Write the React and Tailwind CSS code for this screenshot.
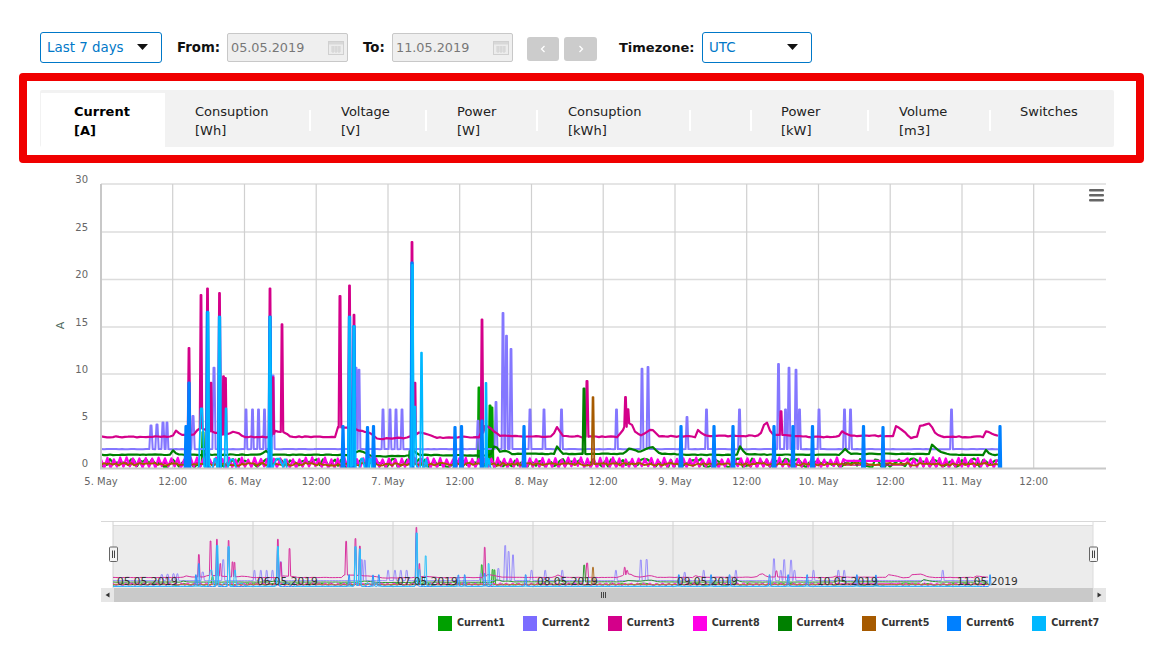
import React from "react";

const END = 1000;
const X0 = 101;
const Y0 = 468;
const UNIT = 9.45;

function noise(i, seed) {
  const s = Math.sin(i * 12.9898 + seed * 78.233) * 43758.5453;
  return s - Math.floor(s) - 0.5;
}
function interp(keys, x) {
  if (x <= keys[0][0]) return keys[0][1];
  for (let i = 1; i < keys.length; i++) {
    if (x <= keys[i][0]) {
      const [a, b] = keys[i - 1];
      const [c, d] = keys[i];
      return b + ((d - b) * (x - a)) / (c - a);
    }
  }
  return keys[keys.length - 1][1];
}
function build(keys, spikes, seed, amp, from = X0, to = END) {
  const list = [...spikes].sort((a, b) => a[0] - b[0]);
  const pts = [];
  const base = (x, i) => interp(keys, x) + noise(i, seed) * amp;
  let i = 0;
  for (let x = from; x <= to; x += 3) {
    i++;
    const inside = list.some((s) => Math.abs(x - s[0]) <= (s[2] || 1.6) * 0.72);
    if (!inside) pts.push([x, base(x, i)]);
  }
  list.forEach((s) => {
    const hw = (s[2] || 1.6) * 0.72;
    const b = s[3] === undefined ? interp(keys, s[0]) : s[3];
    pts.push([s[0] - hw, b]);
    pts.push([s[0] - hw * 0.3, s[1]]);
    pts.push([s[0] + hw * 0.3, s[1]]);
    pts.push([s[0] + hw, b]);
  });
  return pts.sort((a, b) => a[0] - b[0]);
}
function zigzag(period, hi, lo, seed, flats = []) {
  const pts = [];
  let i = 0;
  for (let x = X0; x <= END; x += period / 2) {
    i++;
    const fl = flats.find((f) => x >= f[0] && x <= f[1]);
    if (fl) pts.push([x, fl[2]]);
    else pts.push([x, (i % 2 ? hi : lo) + noise(i, seed) * 0.25]);
  }
  return pts;
}

const pinkKeys = [[101,3.3],[172,3.3],[176,3.9],[182,3.5],[195,3.5],[198,4.3],[206,4],[225,3.5],[232,3.8],[238,3.7],[244,3.3],[272,3.3],[274,3.9],[285,3.8],[290,3.3],[336,3.3],[338,4.3],[346,4.3],[362,3.9],[370,3.7],[378,3.1],[408,3.2],[420,3.8],[428,3.5],[436,3.2],[480,3.3],[486,4.6],[494,3.9],[500,3.4],[552,3.3],[557,4.3],[563,3.4],[586,3.3],[612,3.3],[618,3.3],[630,5],[635,3.9],[640,3.4],[652,4.1],[658,3.4],[695,3.3],[698,4],[705,3.4],[760,3.4],[763,4.5],[767,4.8],[771,3.6],[790,3.4],[805,3.3],[838,3.3],[842,3.9],[850,3.4],[893,3.4],[895,4.5],[905,3.8],[910,3.2],[918,3.3],[920,4.5],[930,4.7],[935,3.7],[942,3.3],[984,3.3],[986,3.9],[1000,3.3]];
const pinkSpikes = [[189,12.7],[201,18.3],[207.5,19],[211,9,1.4],[219.5,18.5],[223.5,9.7,1.4],[225.5,9.5,1.4],[270,19],[273,9.6,1.4],[282,15.2],[340,18.2,1.8],[349.5,19.3],[354,16.2],[412,23.9],[415,9,1.3],[482,15.7],[587,9.2,2],[625.5,7.5,1.6],[628,6.2,1.6],[781,6,1.8]];
const purpleKeys = [[101,2],[1000,2]];
const purpleSpikes = [[151,4.5,2.4],[157,4.6,2.4],[163,4.8,2.2],[167,4.8,2],[193,5.5,2.4],[214,10.6,2.2],[246,6.2,1.8],[252.5,6.2,1.8],[258.5,6.2,1.8],[264.5,6.2,1.8],[273,9.8,2.2],[356,10.6,2.2],[359,10.4,2],[383,6.2,2],[390,6.2,2],[396,6.2,2],[402,6.2,2],[478,5,2],[496,7,2],[503,16.4,2],[506.5,14,2],[511,12.6,2],[530,6.2,2],[544,6.2,2],[561.5,6.2,2],[616.5,6.2,2],[642,10.5,2],[648,10.7,2],[687,5.4,2],[706.5,6.2,2],[739.5,6.2,2],[778.5,11,2],[785.5,6.2,2],[789,10.6,2],[796,10.4,2],[799.5,6.2,2],[819,6.2,2],[844.5,6.2,2],[850.5,6.2,2],[951.5,6.2,2]];
const darkKeys = [[101,1.4],[170,1.4],[173,1.9],[177,1.4],[260,1.4],[266,1.8],[272,1.4],[352,1.4],[358,1.8],[366,1.6],[372,1.2],[410,1.3],[412,2],[418,1.4],[490,1.3],[495,2.5],[500,1.7],[505,1.9],[512,1.5],[555,1.5],[557,2.3],[562,1.5],[625,1.5],[628,2.1],[640,1.7],[652,2.3],[660,1.5],[700,1.4],[737,1.4],[740,2.3],[745,1.5],[770,1.4],[841,1.4],[844,2.1],[850,1.5],[930,1.5],[932,2.5],[940,1.7],[950,1.4],[984,1.4],[986,1.9],[990,1.4],[1000,1.4]];
const blueSpikes = [[186,4.4,1.5,0],[189,9,1.7,0],[207.5,16.5,1.7,0],[219.5,16,1.8,0],[270,16,1.8,0],[343,4.4,1.6,0],[349.5,16,1.7,0],[354,15,1.7,0],[367.5,4.3,1.6,0],[373.5,4.4,1.6,0],[412,21.7,1.7,0],[455,4.3,1.6,0],[461.5,4.4,1.6,0],[482,5,1.5,0],[524,4.4,1.6,0],[681,4.4,1.6,0],[714,4.4,1.6,0],[733,4.4,1.6,0],[774,4.4,1.6,0],[793,4.4,1.6,0],[812.5,4.4,1.6,0],[863.5,4.4,1.6,0],[883,4.3,1.5,0],[1000,4.4,1.3,0]];
const cyanKeys = [[101,-0.3],[1000,-0.3]];
const cyanSpikes = [[201.5,6.3,3.6,0.2],[208,16.5,1.8,0.3],[215,1,3,0],[219.5,16,1.8,0.5],[226,6.3,2,0.5],[232,0.9,6,0],[270,16,2,0.5],[278,1,6,0.3],[285,0.9,2.4,0],[349.5,16,1.8,0.2],[354,15,1.8,0.3],[362,1,3.6,0],[370,1,2.4,0],[412.5,21.5,1.7,0.3],[415,6.5,2,0.3],[421.5,12.2,1.8,0],[426,0.9,2,0],[486,9,1.8,0],[488,1,3.6,0]];
const green1Spikes = [[203,3.8,1.8,0.4],[479,8.5,1.7,0.6],[490,6.6,1.7,0.6],[492,6.4,1.6,0.6],[410,1.8,1.7,0.4]];

const SERIES = [
  { c: "#00a000", w: 2.2, p: build([[101,0.5],[1000,0.5]], green1Spikes, 2, 1) },
  { c: "#8477ff", w: 2, p: build(purpleKeys, purpleSpikes, 3, 0.05) },
  { c: "#d4008a", w: 2.2, p: build(pinkKeys, pinkSpikes, 4, 0.12) },
  { c: "#008000", w: 2.2, p: build(darkKeys, [[584,8.4,1.8,1.5]], 6, 0.08) },
  { c: "#d4008a", w: 1.2, p: zigzag(6.4, 0.7, 0.1, 8, [[845,905,0.3]]) },
  { c: "#ff00e6", w: 2.2, p: zigzag(6.4, 1, 0.1, 5, [[845,905,0.75]]) },
  { c: "#a65a00", w: 1.8, p: build([[101,0.4],[1000,0.4]], [[593,7.5,1.8,0.4]], 7, 0.3) },
  { c: "#0080ff", w: 2.6, p: build([[101,-0.4],[1000,-0.4]], blueSpikes, 9, 0) },
  { c: "#00b8ff", w: 1.8, p: build(cyanKeys, cyanSpikes, 10, 0, 101, 990) },
];

const mainPts = (p) => p.map(([x, v]) => `${x.toFixed(1)},${(Y0 - v * UNIT).toFixed(1)}`).join(" ");
const navPts = (p) => p.map(([x, v]) => `${(113 + (x - X0) * 0.9756).toFixed(1)},${(585.5 - v * 2.43).toFixed(1)}`).join(" ");

const xTicks = [
  [101, "5. May"],[172.7, "12:00"],[244.5, "6. May"],[316.2, "12:00"],[388, "7. May"],[459.7, "12:00"],[531.5, "8. May"],[603.2, "12:00"],[675, "9. May"],[746.7, "12:00"],[818.5, "10. May"],[890.2, "12:00"],[962, "11. May"],[1033.7, "12:00"],
];
const yTicks = [[30, 184],[25, 232],[20, 279.5],[15, 327],[10, 374],[5, 421.5],[0, 468]];
const navDates = ["05.05.2019","06.05.2019","07.05.2019","08.05.2019","09.05.2019","10.05.2019","11.05.2019"];

function Chart() {
  return (
    <svg width="1157" height="437" viewBox="0 170 1157 437" className="block">
      <defs>
        <clipPath id="plot"><rect x="101" y="180" width="1005" height="288" /></clipPath>
        <clipPath id="nav"><rect x="113" y="525" width="980" height="63" /></clipPath>
      </defs>
      {yTicks.slice(0, 6).map(([v, y]) => (
        <line key={v} x1="101" x2="1106" y1={y} y2={y} stroke="#dcdcdc" strokeWidth="1.4" />
      ))}
      {xTicks.slice(1).map(([x], i) => (
        <line key={i} x1={x} x2={x} y1="184" y2="468" stroke="#d0d0d0" strokeWidth="1.2" />
      ))}
      <g clipPath="url(#plot)" fill="none" strokeLinejoin="round">
        {SERIES.map((s, i) => (
          <polyline key={i} points={mainPts(s.p)} stroke={s.c} strokeWidth={s.w} />
        ))}
      </g>
      <line x1="101" x2="101" y1="184" y2="469" stroke="#c8c8c8" strokeWidth="2" />
      <line x1="100" x2="1106" y1="468.5" y2="468.5" stroke="#c8c8c8" strokeWidth="2" />
      {yTicks.map(([v, y]) => (
        <text key={v} x="88" y={y - 1.5} textAnchor="end" fontSize="10" fill="#666">{v}</text>
      ))}
      {xTicks.map(([x, t], i) => (
        <text key={i} x={x} y="485" textAnchor="middle" fontSize="10" fill="#666">{t}</text>
      ))}
      <text x="0" y="0" transform="translate(64 325.5) rotate(-90)" textAnchor="middle" fontSize="11" fill="#4d6a60">A</text>
      <rect x="1089" y="189" width="15" height="2.6" rx="1" fill="#666" />
      <rect x="1089" y="194" width="15" height="2.6" rx="1" fill="#666" />
      <rect x="1089" y="199" width="15" height="2.6" rx="1" fill="#666" />

      {/* navigator */}
      <line x1="101" x2="1106" y1="521.5" y2="521.5" stroke="#d8d8d8" strokeWidth="1.2" />
      <rect x="113" y="525" width="980" height="63" fill="#ececec" />
      <line x1="113" x2="1093" y1="525.5" y2="525.5" stroke="#dcdcdc" strokeWidth="1" />
      {[113, 253, 393, 533, 673, 813, 953].map((x) => (
        <line key={x} x1={x} x2={x} y1="521" y2="588" stroke="#d2d2d2" strokeWidth="1" />
      ))}
      <line x1="1093" x2="1093" y1="521" y2="588" stroke="#dcdcdc" strokeWidth="1" />
      <g clipPath="url(#nav)" fill="none" opacity="0.8">
        {SERIES.map((s, i) => (
          <polyline key={i} points={navPts(s.p)} stroke={s.c} strokeWidth="1" />
        ))}
      </g>
      {navDates.map((d, i) => (
        <text key={d} x={117 + i * 140} y="585" fontSize="10.6" fill="#333">{d}</text>
      ))}
      {[109.5, 1089.5].map((x) => (
        <g key={x}>
          <rect x={x} y="547" width="8" height="14.5" fill="#f4f4f4" stroke="#666" strokeWidth="1" rx="1" />
          <line x1={x + 3} x2={x + 3} y1="550.5" y2="558" stroke="#444" />
          <line x1={x + 5} x2={x + 5} y1="550.5" y2="558" stroke="#444" />
        </g>
      ))}
      {/* scrollbar */}
      <rect x="101" y="588" width="1005" height="14" fill="#c9c9c9" />
      <rect x="101" y="588" width="13" height="14" fill="#e6e6e6" />
      <rect x="1093" y="588" width="13" height="14" fill="#e6e6e6" />
      <path d="M109.5 592.5 L105.5 595 L109.5 597.5 Z" fill="#333" />
      <path d="M1097.5 592.5 L1101.5 595 L1097.5 597.5 Z" fill="#333" />
      {[601, 603, 605].map((x) => (
        <line key={x} x1={x + 0.5} x2={x + 0.5} y1="592" y2="598" stroke="#444" />
      ))}
    </svg>
  );
}

function Select({ label, width }) {
  return (
    <div className={`${width} h-[31px] flex items-center justify-between pl-[6px] pr-[13px] border border-[#0078c8] rounded-[3px] bg-white`}>
      <span className="text-[13.4px] text-[#0078c8] mt-[1px]">{label}</span>
      <svg width="11" height="6" viewBox="0 0 11 6" className="-mt-[2px]"><path d="M0 0H11L5.5 6Z" fill="#111" /></svg>
    </div>
  );
}

function CalIcon() {
  return (
    <svg width="16" height="14" viewBox="0 0 16 14">
      <rect x="0.5" y="0.5" width="15" height="13" fill="#ececec" stroke="#d0d0d0" />
      <rect x="1" y="1" width="14" height="2.5" fill="#d8d8d8" />
      <path d="M3 6H13M3 8H13M3 10H13M5 5V12M8 5V12M11 5V12" stroke="#d2d2d2" strokeWidth="1" fill="none" />
    </svg>
  );
}

function DateInput({ value }) {
  return (
    <div className="w-[121px] h-[29px] flex items-center justify-between pl-[3px] pr-[2px] bg-[#efefef] border border-[#c8c8c8] rounded-[2px]">
      <span className="text-[12.8px] text-[#777] mt-[1px]">{value}</span>
      <span className="flex mr-[1px]"><CalIcon /></span>
    </div>
  );
}

function NavBtn({ dir, width }) {
  return (
    <div className={`${width} h-[24px] flex items-center justify-center bg-[#cccccc] rounded-[3px]`}>
      <svg width="6" height="8" viewBox="0 0 6 8">
        <path d={dir === "l" ? "M4.5 1L1.5 4L4.5 7" : "M1.5 1L4.5 4L1.5 7"} stroke="#fff" strokeWidth="1.3" fill="none" />
      </svg>
    </div>
  );
}

const TABS = [
  ["Current", "[A]", "w-[124px] pl-[33px] bg-white font-bold text-black mt-[3px] pt-[9px]"],
  ["Consuption", "[Wh]", "w-[145px] pl-[30px] pt-[12px]"],
  ["Voltage", "[V]", "w-[116px] pl-[31px] pt-[12px]"],
  ["Power", "[W]", "w-[111px] pl-[31px] pt-[12px]"],
  ["Consuption", "[kWh]", "w-[153px] pl-[31px] pt-[12px]"],
  ["", "", "w-[61px] pt-[12px]"],
  ["Power", "[kW]", "w-[117px] pl-[30px] pt-[12px]"],
  ["Volume", "[m3]", "w-[122px] pl-[31px] pt-[12px]"],
  ["Switches", "", "w-[124px] pl-[30px] pt-[12px]"],
];
const LEGEND = [
  ["Current1", "bg-[#00a000]"],
  ["Current2", "bg-[#7b6cff]"],
  ["Current3", "bg-[#d4008a]"],
  ["Current8", "bg-[#ff00e6]"],
  ["Current4", "bg-[#008000]"],
  ["Current5", "bg-[#a65a00]"],
  ["Current6", "bg-[#0080ff]"],
  ["Current7", "bg-[#00b8ff]"],
];

export default function App() {
  return (
    <div className="relative w-[1157px] h-[647px] overflow-hidden bg-white pt-[32px] [font-family:'DejaVu_Sans',sans-serif]">
      <div className="flex items-center h-[31px] pl-[40px]">
        <Select label="Last 7 days" width="w-[122px]" />
        <span className="ml-[15px] w-[50px] text-[13.3px] font-bold text-[#111] mt-[1px]">From:</span>
        <DateInput value="05.05.2019" />
        <span className="ml-[15px] w-[29px] text-[13.3px] font-bold text-[#111] mt-[1px]">To:</span>
        <DateInput value="11.05.2019" />
        <div className="ml-[14px] flex gap-[5px] mt-[3px]">
          <NavBtn dir="l" width="w-[32px]" />
          <NavBtn dir="r" width="w-[33px]" />
        </div>
        <span className="ml-[22px] w-[83px] text-[13px] font-bold text-[#111] mt-[1px]">Timezone:</span>
        <Select label="UTC" width="w-[110px]" />
      </div>
      <div className="ml-[19px] mt-[10px] w-[1125px] h-[90px] border-[8px] border-[#f00000] rounded-[4px] pl-[13px] pt-[9px]">
        <div className="flex w-[1074px] h-[57px] bg-[#f2f2f2] rounded-[2px] pl-[1px]">
          {TABS.map(([a, b, cls], i) => (
            <div key={i} className={`relative text-[13px] leading-[19px] text-[#222] ${cls}`}>
              <div className="h-[19px]">{a}</div>
              <div className="h-[19px]">{b}</div>
              {i > 1 && <span className="absolute -left-[1px] top-[20px] w-[1.5px] h-[21px] bg-white" />}
            </div>
          ))}
        </div>
      </div>
      <div className="mt-[7px]">
        <Chart />
      </div>
      <div className="flex pl-[438px] mt-[9px]">
        {LEGEND.map(([t, c]) => (
          <div key={t} className="w-[84.9px] flex items-center gap-[5px] shrink-0">
            <span className={`w-[14px] h-[15px] shrink-0 ${c}`} />
            <span className="text-[9.6px] font-bold text-[#333]">{t}</span>
          </div>
        ))}
      </div>
    </div>
  );
}
